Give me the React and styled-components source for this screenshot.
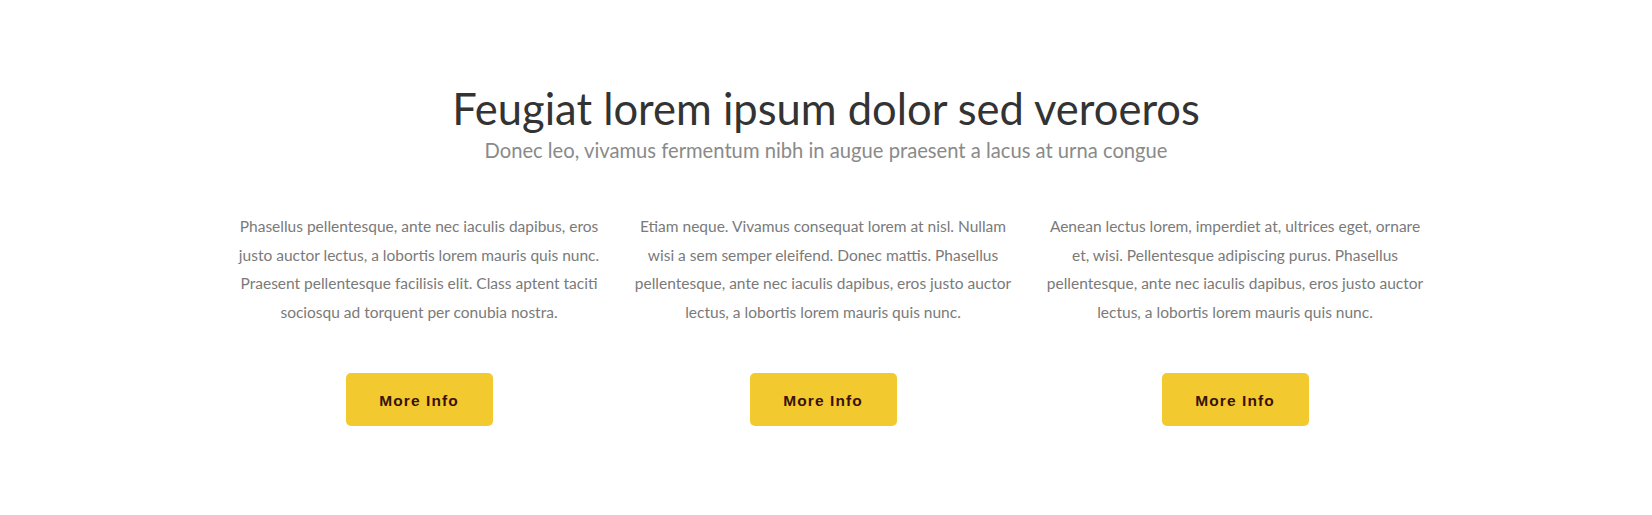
import React from "react";
import styled, { createGlobalStyle } from "styled-components";

const GlobalStyle = createGlobalStyle`
  body {
    margin: 0;
    background: #ffffff;
    font-family: "Lato", "Noto Sans", sans-serif;
  }
`;

const Section = styled.section`
  box-sizing: border-box;
  width: 100%;
  padding: 82px 0 70px;
  text-align: center;
`;

const Header = styled.header`
  margin-bottom: 48px;
`;

const Title = styled.h2`
  margin: 0 0 2px;
  font-family: "Lato", sans-serif;
  font-weight: 400;
  font-size: 43.5px;
  line-height: 1.2;
  color: #333333;
`;

const Subtitle = styled.p`
  margin: 0;
  font-size: 20.2px;
  line-height: 1.4;
  color: #8a8a8a;
`;

const Columns = styled.div`
  display: grid;
  grid-template-columns: 408px 400px 424px;
  justify-content: center;
  padding-left: 10px;
`;

const Column = styled.div`
  display: flex;
  flex-direction: column;
  align-items: center;
`;

const Text = styled.p`
  max-width: 384px;
  margin: 0 0 47px;
  font-size: 15.5px;
  line-height: 28.4px;
  color: #7a7a7a;
`;

const Button = styled.a`
  display: inline-flex;
  align-items: center;
  justify-content: center;
  box-sizing: border-box;
  width: 147px;
  height: 53px;
  padding-top: 2px;
  border-radius: 5px;
  background: #f2ca2f;
  color: #3a1208;
  font-family: "Liberation Sans", Arial, sans-serif;
  font-weight: 700;
  font-size: 15.5px;
  letter-spacing: 1.1px;
  text-decoration: none;
  cursor: pointer;
`;

const items = [
  "Phasellus pellentesque, ante nec iaculis dapibus, eros justo auctor lectus, a lobortis lorem mauris quis nunc. Praesent pellentesque facilisis elit. Class aptent taciti sociosqu ad torquent per conubia nostra.",
  "Etiam neque. Vivamus consequat lorem at nisl. Nullam wisi a sem semper eleifend. Donec mattis. Phasellus pellentesque, ante nec iaculis dapibus, eros justo auctor lectus, a lobortis lorem mauris quis nunc.",
  "Aenean lectus lorem, imperdiet at, ultrices eget, ornare et, wisi. Pellentesque adipiscing purus. Phasellus pellentesque, ante nec iaculis dapibus, eros justo auctor lectus, a lobortis lorem mauris quis nunc.",
];

const App = () => {
  return (
    <>
      <GlobalStyle />
      <Section>
        <Header>
          <Title>Feugiat lorem ipsum dolor sed veroeros</Title>
          <Subtitle>
            Donec leo, vivamus fermentum nibh in augue praesent a lacus at urna congue
          </Subtitle>
        </Header>
        <Columns>
          {items.map((txt, key) => (
            <Column key={key}>
              <Text>{txt}</Text>
              <Button>More Info</Button>
            </Column>
          ))}
        </Columns>
      </Section>
    </>
  );
};

export default App;
